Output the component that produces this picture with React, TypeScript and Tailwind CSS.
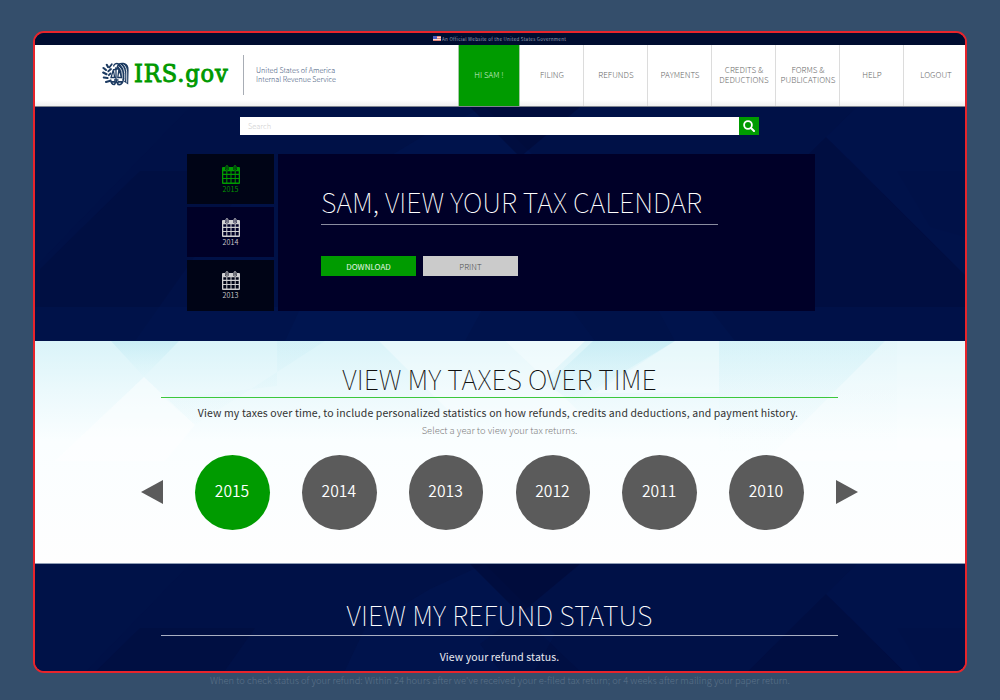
import React from "react";

const years = ["2015", "2014", "2013", "2012", "2011", "2010"];
const nav = [
  ["FILING"],
  ["REFUNDS"],
  ["PAYMENTS"],
  ["CREDITS &", "DEDUCTIONS"],
  ["FORMS &", "PUBLICATIONS"],
  ["HELP"],
  ["LOGOUT"],
];

function Eagle() {
  return (
    <svg viewBox="0 0 27 24" className="h-[24px] w-[27px] shrink-0" fill="none">
      <path
        fill="#1c3a61"
        d="M16 1.500C18 .6 20.500 .4 22.500 1C25.500 2 26.800 4.500 26.600 8L26.200 22.500L22.500 20L20.500 18L16.500 8L14.500 5Z"
      />
      <path
        stroke="#fff"
        strokeWidth=".8"
        d="M18.500 2.500C20 4 21.500 5.500 22.300 9C23 12 22.800 16 22.500 19M21.500 2.500C24 4.500 24.900 8 24.700 12V20.500M16.500 4.500C18.500 6 19.800 8.500 20.200 12V17"
      />
      <g stroke="#1c3a61" strokeWidth="2.100" strokeLinecap="round">
        <path d="M1.500 6L4 8M1.200 10.500L4.500 12.200M1.800 15.500L5.500 16M4 20L7.500 19M4.800 2.800L6 5" />
        <path d="M9.800 2.200L7.300 5.500M9 7L6.300 9.300M8.500 11.500L6.800 13.200" strokeWidth="1.800" />
      </g>
      <path
        stroke="#1c3a61"
        strokeWidth="1.300"
        d="M11.500 4.500C12 2 14 1 16.500 1.800M11 8L17 6.500M14 5V18M12 18H16.500M11.300 8L9 15.500H12.700ZM17 7L15.800 15.500H19.500Z"
      />
      <path
        stroke="#1c3a61"
        strokeWidth="1.700"
        strokeLinejoin="round"
        d="M8.500 17.500C9 21 10.500 22.700 12.500 22.500L14.300 18.800L16.200 22.500C18.500 23 20.500 21.500 21 18.500M9.500 19.800H13M16 19.800H20"
      />
    </svg>
  );
}

function Flag() {
  return (
    <svg viewBox="0 0 8 5" className="h-[5px] w-[8px] shrink-0">
      <path fill="#f6d9d2" d="M0 0H8V5H0Z" />
      <path fill="#e3877c" d="M0 0H8V1H0ZM0 2H8V3H0ZM0 4H8V5H0Z" />
      <path fill="#4a5fc4" d="M0 0H4V3H0Z" />
    </svg>
  );
}

function Calendar() {
  return (
    <svg viewBox="0 0 18 19" className="ml-[1px] h-[19px] w-[18px]">
      <path
        fill="currentColor"
        fillRule="evenodd"
        d="M1 2H3V3.500A1.900 1.900 0 0 0 6.800 3.500V2H11.200V3.500A1.900 1.900 0 0 0 15 3.500V2H17Q18 2 18 3V18Q18 19 17 19H1Q0 19 0 18V3Q0 2 1 2ZM1.300 6.200V8.800H4.300V6.200ZM5.300 6.200V8.800H8.500V6.200ZM9.500 6.200V8.800H12.700V6.200ZM13.700 6.200V8.800H16.700V6.200ZM1.300 9.900V13H4.300V9.900ZM5.300 9.900V13H8.500V9.900ZM9.500 9.900V13H12.700V9.900ZM13.700 9.900V13H16.700V9.900ZM1.300 14.100V17.500H4.300V14.100ZM5.300 14.100V17.500H8.500V14.100ZM9.500 14.100V17.500H12.700V14.100ZM13.700 14.100V17.500H16.700V14.100Z"
      />
      <rect x="4" y=".6" width="1.900" height="3.900" rx=".95" fill="none" stroke="currentColor" strokeWidth="1" />
      <rect x="12.100" y=".6" width="1.900" height="3.900" rx=".95" fill="none" stroke="currentColor" strokeWidth="1" />
    </svg>
  );
}

function DarkFacets() {
  return (
    <svg viewBox="0 0 930 234" preserveAspectRatio="xMidYMin slice" className="absolute inset-0 h-[234px] w-full">
      <path fill="#00174e" d="M0 160L155 0H0Z" opacity=".2" />
      <path fill="#000833" d="M53 64H930V130L895 120L862 64H53Z" opacity=".1" />
      <path fill="#000833" d="M105 64L5 162V234H100L220 64Z" opacity=".22" />
      <path fill="#001a5a" d="M330 64L395 25L450 0L520 70L430 234H250Z" opacity=".25" />
      <path fill="#00052c" d="M485 50L600 160L640 234H560L445 80Z" opacity=".15" />
      <path fill="#00052c" d="M435 0H545L485 50Z" opacity=".4" />
      <path fill="#00052c" d="M791 30L650 170L700 234H930V168Z" opacity=".22" />
      <path fill="#001a5a" d="M791 30L822 0H930V168Z" opacity=".2" />
      <path fill="#001a5a" d="M0 200H930V234H0Z" opacity=".3" />
    </svg>
  );
}

function LightFacets() {
  return (
    <svg viewBox="0 0 930 222" className="absolute inset-0 h-full w-full" preserveAspectRatio="none">
      <defs>
        <linearGradient id="sky" x1="0" y1="0" x2="0" y2="1">
          <stop offset="0" stopColor="#daf4f9" />
          <stop offset=".22" stopColor="#ebf9fc" />
          <stop offset=".45" stopColor="#fafeff" />
          <stop offset="1" stopColor="#fefefe" />
        </linearGradient>
        <linearGradient id="tint" x1="0" y1="0" x2="0" y2="1">
          <stop offset="0" stopColor="#b4e5f0" stopOpacity=".45" />
          <stop offset="1" stopColor="#d5f5fa" stopOpacity=".1" />
        </linearGradient>
      </defs>
      <path fill="url(#sky)" d="M0 0H930V222H0Z" />
      <path fill="url(#tint)" d="M76 0H144L109 36Z" />
      <path fill="#fff" opacity=".45" d="M109 36L160 84L130 120H40L20 120Z" />
      <path fill="url(#tint)" opacity=".4" d="M242 0H290L205 55L160 84L130 58L242 45Z" />
      <path fill="#fff" opacity=".35" d="M344 0H470L510 38L550 76L420 76Z" />
      <path fill="url(#tint)" d="M558 0H640L540 60L510 45Z" />
      <path fill="#fff" opacity=".5" d="M470 0H550L510 38Z" />
      <path fill="#fff" opacity=".3" d="M640 0H684V52L560 52Z" />
      <path fill="url(#tint)" opacity=".2" d="M684 0H862V110H684Z" />
      <path fill="#fff" opacity=".35" d="M850 0H930V120H730Z" />
    </svg>
  );
}

export default function App() {
  return (
    <div className="h-[700px] w-[1000px] overflow-hidden bg-[#344e6b] pl-[33px] pt-[31px] font-['Noto_Sans_CJK_SC',sans-serif]">
      <div className="flex h-[642px] w-[934px] flex-col overflow-hidden rounded-[11px] border-2 border-[#e8242b] bg-[#001046]">
        <div className="flex h-[12px] shrink-0 items-center bg-[#000d30] pb-[1px] pl-[398px]">
          <Flag />
          <span className="ml-[1px] whitespace-nowrap text-[4.500px] leading-[8px] tracking-[.310px] text-[#98a1b5]">
            An Official Website of the United States Government
          </span>
        </div>

        <header className="flex h-[62px] shrink-0 border-b border-[#7f858f] bg-white bg-linear-to-t from-[#f0f0f0] to-[#fff] to-10%">
          <div className="flex w-[423px] shrink-0 items-center pl-[67px]">
            <div className="mt-[-4px]">
              <Eagle />
            </div>
            <span className="ml-[5px] mt-[-4px] w-[98px] whitespace-nowrap font-['DejaVu_Serif_Condensed','DejaVu_Serif',serif] text-[25px] leading-[30px] tracking-[.95px] text-[#009900] [-webkit-text-stroke:0.9px_#009900]">
              IRS.gov
            </span>
            <div className="ml-[11px] mt-[-2px] h-[40px] w-px bg-[#a8adb5]" />
            <div className="ml-[12px] mt-[-2px] whitespace-nowrap text-[7.200px] font-light leading-[9px] text-[#3f587d]">
              <div>United States of America</div>
              <div>Internal Revenue Service</div>
            </div>
          </div>
          <nav className="flex shrink-0">
            <a className="flex h-[61px] w-[62px] items-center justify-center border-x border-[#a5c8a5] bg-[#009b00] pb-[2px] text-[8px] font-light text-[#d2ecd2]">
              HI SAM !
            </a>
            {nav.map((lines) => (
              <a
                key={lines[0]}
                className="flex h-[61px] w-[64px] flex-col items-center justify-center whitespace-nowrap border-r border-[#dcdcdc] pb-[2px] pl-[1px] text-[8.100px] font-light leading-[10px] text-[#6b6b6b]"
              >
                {lines.map((l) => (
                  <span key={l}>{l}</span>
                ))}
              </a>
            ))}
          </nav>
        </header>

        <section className="relative h-[234px] shrink-0 bg-[#001147]">
          <DarkFacets />
          <div className="relative flex flex-col pt-[10px]">
            <div className="ml-[205px] flex h-[18px] w-[519px]">
              <div className="flex flex-1 items-center bg-white pl-[8px] text-[7.500px] font-light leading-[10px] text-[#cfcfcf]">
                Search
              </div>
              <button className="flex w-[20px] items-center justify-center bg-[#009b00]">
                <svg viewBox="0 0 12 12" className="h-[12px] w-[12px]" fill="none" stroke="#fff">
                  <circle cx="5" cy="5" r="3.900" strokeWidth="1.800" />
                  <path d="M8 8L11 11" strokeWidth="2" strokeLinecap="round" />
                </svg>
              </button>
            </div>
            <div className="ml-[152px] mt-[18.500px] flex h-[157px] gap-[4px]">
              <div className="flex w-[87px] flex-col gap-[2.500px]">
                {["2015", "2014", "2013"].map((y, i) => (
                  <div
                    key={y}
                    className={
                      "flex flex-1 flex-col items-center pt-[11px] text-[7.200px] leading-[10px] " +
                      (i === 0 ? "bg-[#000416] text-[#009b00]" : i === 1 ? "bg-[#000027] text-[#d0d0d2]" : "bg-[#000416] text-[#d0d0d2]")
                    }
                  >
                    <Calendar />
                    <span className="font-[350]">{y}</span>
                  </div>
                ))}
              </div>
              <div className="w-[537px] bg-[#000028] pl-[43px] pt-[28.500px]">
                <div className="w-[397px] border-b border-[#8a8ca0] pb-[2px]">
                  <h1 className="whitespace-nowrap text-[27px] font-thin leading-[40px] tracking-[.02px] text-white">SAM, VIEW YOUR TAX CALENDAR</h1>
                </div>
                <div className="mt-[31px] flex gap-[7px]">
                  <button className="flex h-[20px] w-[95px] items-center justify-center bg-[#009b00] pt-[2px] text-[8px] leading-[10px] text-[#e6f5e6]">
                    DOWNLOAD
                  </button>
                  <button className="flex h-[20px] w-[95px] items-center justify-center bg-[#cbcbcb] pt-[2px] text-[8px] font-light leading-[10px] text-[#505050]">
                    PRINT
                  </button>
                </div>
              </div>
            </div>
          </div>
        </section>

        <section className="relative h-[223px] shrink-0 border-b border-[#8f9db5]">
          <LightFacets />
          <div className="relative flex flex-col items-center">
            <div className="mr-[1px] mt-[19px] flex h-[38px] w-[677px] justify-center border-b border-[#3cc83c]">
              <h2 className="whitespace-nowrap text-[27px] font-thin leading-[38px] text-[#111]">VIEW MY TAXES OVER TIME</h2>
            </div>
            <p className="mr-[4px] mt-[7px] whitespace-nowrap text-[10.500px] leading-[16px] tracking-[.118px] text-[#333]">
              View my taxes over time, to include personalized statistics on how refunds, credits and deductions, and payment history.
            </p>
            <p className="mr-[1px] mt-[2px] whitespace-nowrap text-[9.400px] font-light leading-[14px] text-[#7c7c7c]">
              Select a year to view your tax returns.
            </p>
            <div className="mr-[1px] mt-[18px] flex items-center">
              <svg viewBox="0 0 22 24" className="mr-[32px] h-[24px] w-[22px]">
                <path fill="#5b5b5b" d="M22 0V24L0 12Z" />
              </svg>
              <div className="flex gap-[32.300px]">
                {years.map((y, i) => (
                  <div
                    key={y}
                    className={
                      "flex h-[74.500px] w-[74.500px] items-center justify-center rounded-full pb-[2px] pr-[1px] text-[15.700px] font-[350] text-white " +
                      (i === 0 ? "bg-[#009b00]" : "bg-[#5b5b5b]")
                    }
                  >
                    {y}
                  </div>
                ))}
              </div>
              <svg viewBox="0 0 22 24" className="ml-[32px] h-[24px] w-[22px]">
                <path fill="#5b5b5b" d="M0 0V24L22 12Z" />
              </svg>
            </div>
          </div>
        </section>

        <section className="relative h-[107px] shrink-0 overflow-hidden bg-[#001147]">
          <DarkFacets />
          <div className="relative flex flex-col items-center">
            <div className="mr-[1px] mt-[31px] flex h-[41px] w-[677px] justify-center border-b border-[#a9afc2]">
              <h2 className="whitespace-nowrap text-[27px] font-thin leading-[40px] tracking-[.1px] text-white">VIEW MY REFUND STATUS</h2>
            </div>
            <p className="mr-[1px] mt-[13px] whitespace-nowrap text-[10.500px] leading-[16px] tracking-[.1px] text-[#e8eaf0]">
              View your refund status.
            </p>
          </div>
        </section>
      </div>
      <p className="mt-[-1px] w-[934px] whitespace-nowrap text-center text-[9.370px] font-light leading-[16px] text-[#5b728a]">
        When to check status of your refund: Within 24 hours after we've received your e-filed tax return; or 4 weeks after mailing your paper return.
      </p>
    </div>
  );
}
